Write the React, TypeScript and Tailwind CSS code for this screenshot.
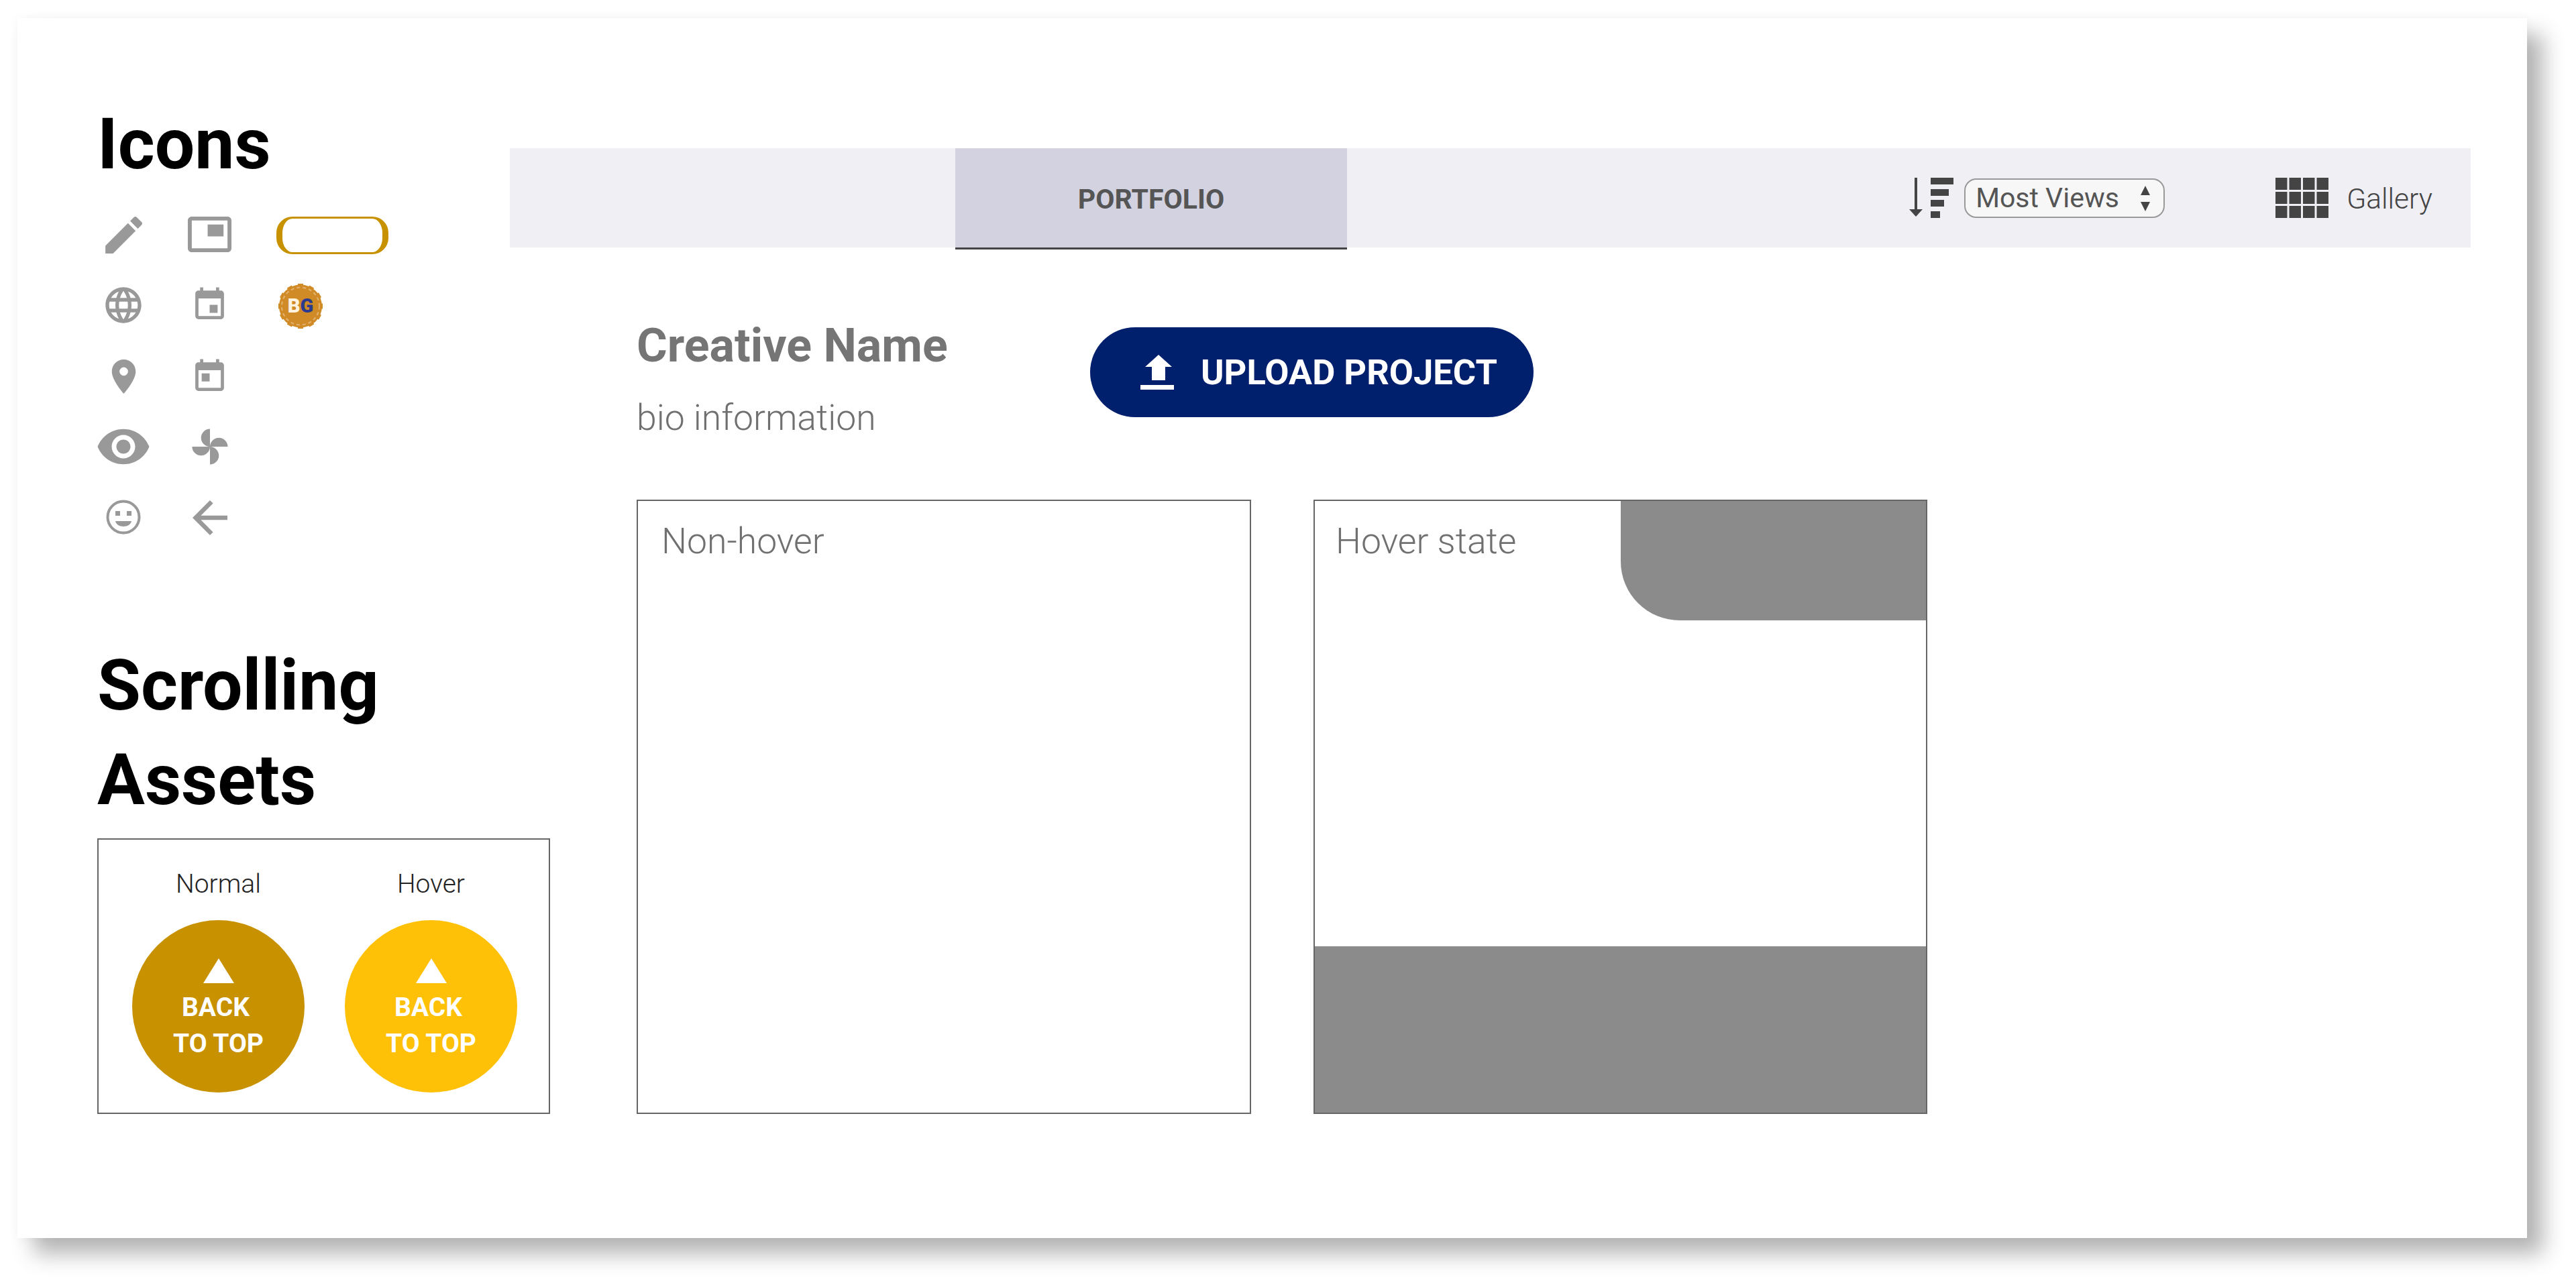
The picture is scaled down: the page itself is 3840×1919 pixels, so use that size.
import {
  MdArrowBack,
  MdEdit,
  MdEvent,
  MdLanguage,
  MdPictureInPicture,
  MdPlace,
  MdRemoveRedEye,
  MdToday,
} from 'react-icons/md';

function SortIcon() {
  return (
    <svg width="66" height="60" viewBox="0 0 66 60" fill="#444">
      <rect x="8" y="0" width="4" height="50" />
      <path d="M0 47h20L10 58z" />
      <rect x="32" y="0" width="34" height="10" />
      <rect x="32" y="17" width="27" height="10" />
      <rect x="32" y="33" width="20" height="10" />
      <rect x="32" y="50" width="14" height="10" />
    </svg>
  );
}

function GridIcon() {
  const cols = [0, 20.5, 41, 61.5];
  const rows = [0, 21, 42];
  return (
    <svg width="79" height="60" viewBox="0 0 79 60" fill="#444">
      {rows.map((y) => cols.map((x) => <rect key={`${x}-${y}`} x={x} y={y} width="17.5" height="18" />))}
    </svg>
  );
}

function PinwheelIcon() {
  return (
    <svg width="58" height="58" viewBox="0 0 24 24" fill="currentColor" className="-mt-[3px] shrink-0">
      <path d="M12 12c0-3 2.5-5.5 5.5-5.5S23 9 23 12H12zm0 0c0 3-2.5 5.5-5.5 5.5S1 15 1 12h11zm0 0c-3 0-5.5-2.5-5.5-5.5S9 1 12 1v11zm0 0c3 0 5.5 2.5 5.5 5.5S15 23 12 23V12z" />
    </svg>
  );
}

function SmileyIcon() {
  return (
    <svg width="52" height="52" viewBox="0 0 52 52" fill="currentColor" className="shrink-0">
      <circle cx="26" cy="26" r="23.5" fill="none" stroke="currentColor" strokeWidth="4" />
      <rect x="14" y="17" width="7" height="7" />
      <rect x="31" y="17" width="7" height="7" />
      <path d="M14 32h24c-1 5-6 8-12 8s-11-3-12-8z" />
    </svg>
  );
}

function UploadIcon() {
  return (
    <svg width="50" height="52" viewBox="0 0 50 52" fill="white" className="shrink-0">
      <path d="M27 0l20 18H37v20H17V18H7z" />
      <rect x="0" y="45" width="50" height="7" />
    </svg>
  );
}

function Badge() {
  const points = Array.from({ length: 12 }, (_, i) => i * 30);
  return (
    <div className="relative ml-[13px] mt-[-7px] flex h-[69px] w-[66px] items-center justify-center">
      <svg width="66" height="69" viewBox="0 0 66 69" className="absolute inset-0">
        {points.map((deg) => (
          <rect key={deg} x="29" y="1" width="8" height="5" fill="#D08B27" transform={`rotate(${deg} 33 34.5)`} />
        ))}
        <circle cx="33" cy="34.5" r="32" fill="#D08B27" />
        <circle cx="33" cy="34.5" r="28" fill="none" stroke="#E3B26F" strokeWidth="2" strokeDasharray="5 4" />
      </svg>
      <span className="relative text-[29px] leading-none font-black">
        <span className="text-[#FFF3E0]">B</span>
        <span className="text-[#2B3A8C]">G</span>
      </span>
    </div>
  );
}

function BackToTop({ color }: { color: string }) {
  return (
    <div className={`flex h-[257px] w-[257px] flex-col items-center rounded-full pt-[57px] text-white ${color}`}>
      <div className="h-0 w-0 border-x-[23px] border-b-[37px] border-x-transparent border-b-white" />
      <div className="mt-[9px] pr-[8px] text-[39px] leading-[54px] font-bold">BACK</div>
      <div className="text-[39px] leading-[54px] font-bold">TO TOP</div>
    </div>
  );
}

export default function App() {
  const iconColor = 'text-[#999999]';

  return (
    <div className="h-[1919px] w-[3840px] overflow-hidden bg-white pt-[27px] pl-[26px] font-[Roboto,sans-serif]">
      <div className="flex h-[1819px] w-[3741px] bg-white pl-[119px] shadow-[24px_24px_30px_rgba(0,0,0,0.29),0_0_16px_rgba(0,0,0,0.04)]">
        {/* Left column: icon sheet and scrolling assets */}
        <div className="w-[615px] shrink-0 pt-[118px]">
          <h1 className="text-[105.5px] leading-[141px] font-bold text-black">Icons</h1>

          <div className={`mt-[37px] grid auto-rows-[53px] grid-cols-[78px_65px_180px] gap-x-[57px] gap-y-[52.5px] ${iconColor}`}>
            <div className="flex justify-center"><MdEdit size={73} className="shrink-0 -mt-[9px]" /></div>
            <div className="flex justify-center"><MdPictureInPicture size={71} className="shrink-0 -mt-[9px]" /></div>
            <div className="ml-[10px] h-[56px] w-[167px] rounded-[24px] border-x-[9px] border-y-[3px] border-[#C79100]" />

            <div className="flex justify-center"><MdLanguage size={64} className="shrink-0 -mt-[6px]" /></div>
            <div className="flex justify-center"><MdEvent size={57} className="shrink-0 -mt-[3px]" /></div>
            <Badge />

            <div className="flex justify-center"><MdPlace size={61} className="shrink-0 -mt-[3px]" /></div>
            <div className="col-span-2 flex w-[65px] justify-center"><MdToday size={57} className="shrink-0 -mt-[1px]" /></div>

            <div className="flex justify-center"><MdRemoveRedEye size={84} className="shrink-0 -mt-[16px]" /></div>
            <div className="col-span-2 flex w-[65px] justify-center"><PinwheelIcon /></div>

            <div className="flex justify-center"><SmileyIcon /></div>
            <div className="col-span-2 flex w-[65px] justify-center"><MdArrowBack size={78} className="shrink-0 -mt-[12px]" /></div>
          </div>

          <h2 className="mt-[154px] text-[105.5px] leading-[141px] font-bold text-black">
            Scrolling
            <br />
            Assets
          </h2>

          <div className="mt-[16px] h-[411px] w-[675px] border-2 border-[#666666] pt-[43px] pl-[50px]">
            <div className="flex gap-[60px]">
              <div className="flex w-[257px] flex-col items-center gap-[31px]">
                <span className="text-[39px] leading-[46px] font-light text-[#222222]">Normal</span>
                <BackToTop color="bg-[#C79100]" />
              </div>
              <div className="flex w-[257px] flex-col items-center gap-[31px]">
                <span className="text-[39px] leading-[46px] font-light text-[#222222]">Hover</span>
                <BackToTop color="bg-[#FFC107]" />
              </div>
            </div>
          </div>
        </div>

        {/* Right column: portfolio header, creative info, project cards */}
        <div className="min-w-0 flex-1 pt-[194px] pr-[84px]">
          <div className="flex h-[148px] items-start bg-[#EFEFF4] pr-[57px]">
            <div className="ml-[664px] flex h-[151px] w-[584px] items-center justify-center border-b-[3px] border-[#444444] bg-[#D2D2E0] pt-[6px] text-[41px] font-bold text-[#555555]">
              PORTFOLIO
            </div>
            <div className="ml-auto flex h-[148px] items-center">
              <SortIcon />
              <div className="ml-[16px] flex h-[59px] w-[299px] items-center justify-between rounded-[18px] border-2 border-[#999999] bg-[#F7F7F8] pt-[2px] pr-[19px] pl-[15px] text-[41px] text-[#555555]">
                <span>Most Views</span>
                <svg width="16" height="38" viewBox="0 0 16 38" fill="#444">
                  <path d="M8 0l7 14H1zM1 24h14l-7 14z" />
                </svg>
              </div>
              <div className="ml-[165px]"><GridIcon /></div>
              <span className="ml-[27px] pt-[3px] text-[42.5px] font-light text-[#444444]">Gallery</span>
            </div>
          </div>

          <div className="mt-[106px] flex h-[214px] items-start pl-[189px]">
            <div className="w-[676px]">
              <div className="text-[70px] leading-[80px] font-bold text-[#757575]">Creative Name</div>
              <div className="mt-[38px] text-[53.5px] leading-[60px] font-light text-[#707070]">bio information</div>
            </div>
            <button className="mt-[13px] flex h-[134px] w-[661px] items-center rounded-full bg-[#00206E] pl-[75px] text-[52.5px] font-bold text-white">
              <UploadIcon />
              <span className="ml-[40px]">UPLOAD PROJECT</span>
            </button>
          </div>

          <div className="mt-[56px] flex gap-[93px] pl-[189px]">
            <div className="h-[916px] w-[916px] border-2 border-[#666666] pt-[28px] pl-[35px] text-[53.5px] leading-[64px] font-light text-[#707070]">
              Non-hover
            </div>
            <div className="relative h-[916px] w-[915px] border-2 border-[#666666] pt-[28px] pl-[31px] text-[53.5px] leading-[64px] font-light text-[#707070]">
              Hover state
              <div className="absolute top-0 right-0 h-[178px] w-[455px] rounded-bl-[88px] bg-[#8B8B8B]" />
              <div className="absolute inset-x-0 bottom-0 h-[248px] bg-[#8B8B8B]" />
            </div>
          </div>
        </div>
      </div>
    </div>
  );
}
